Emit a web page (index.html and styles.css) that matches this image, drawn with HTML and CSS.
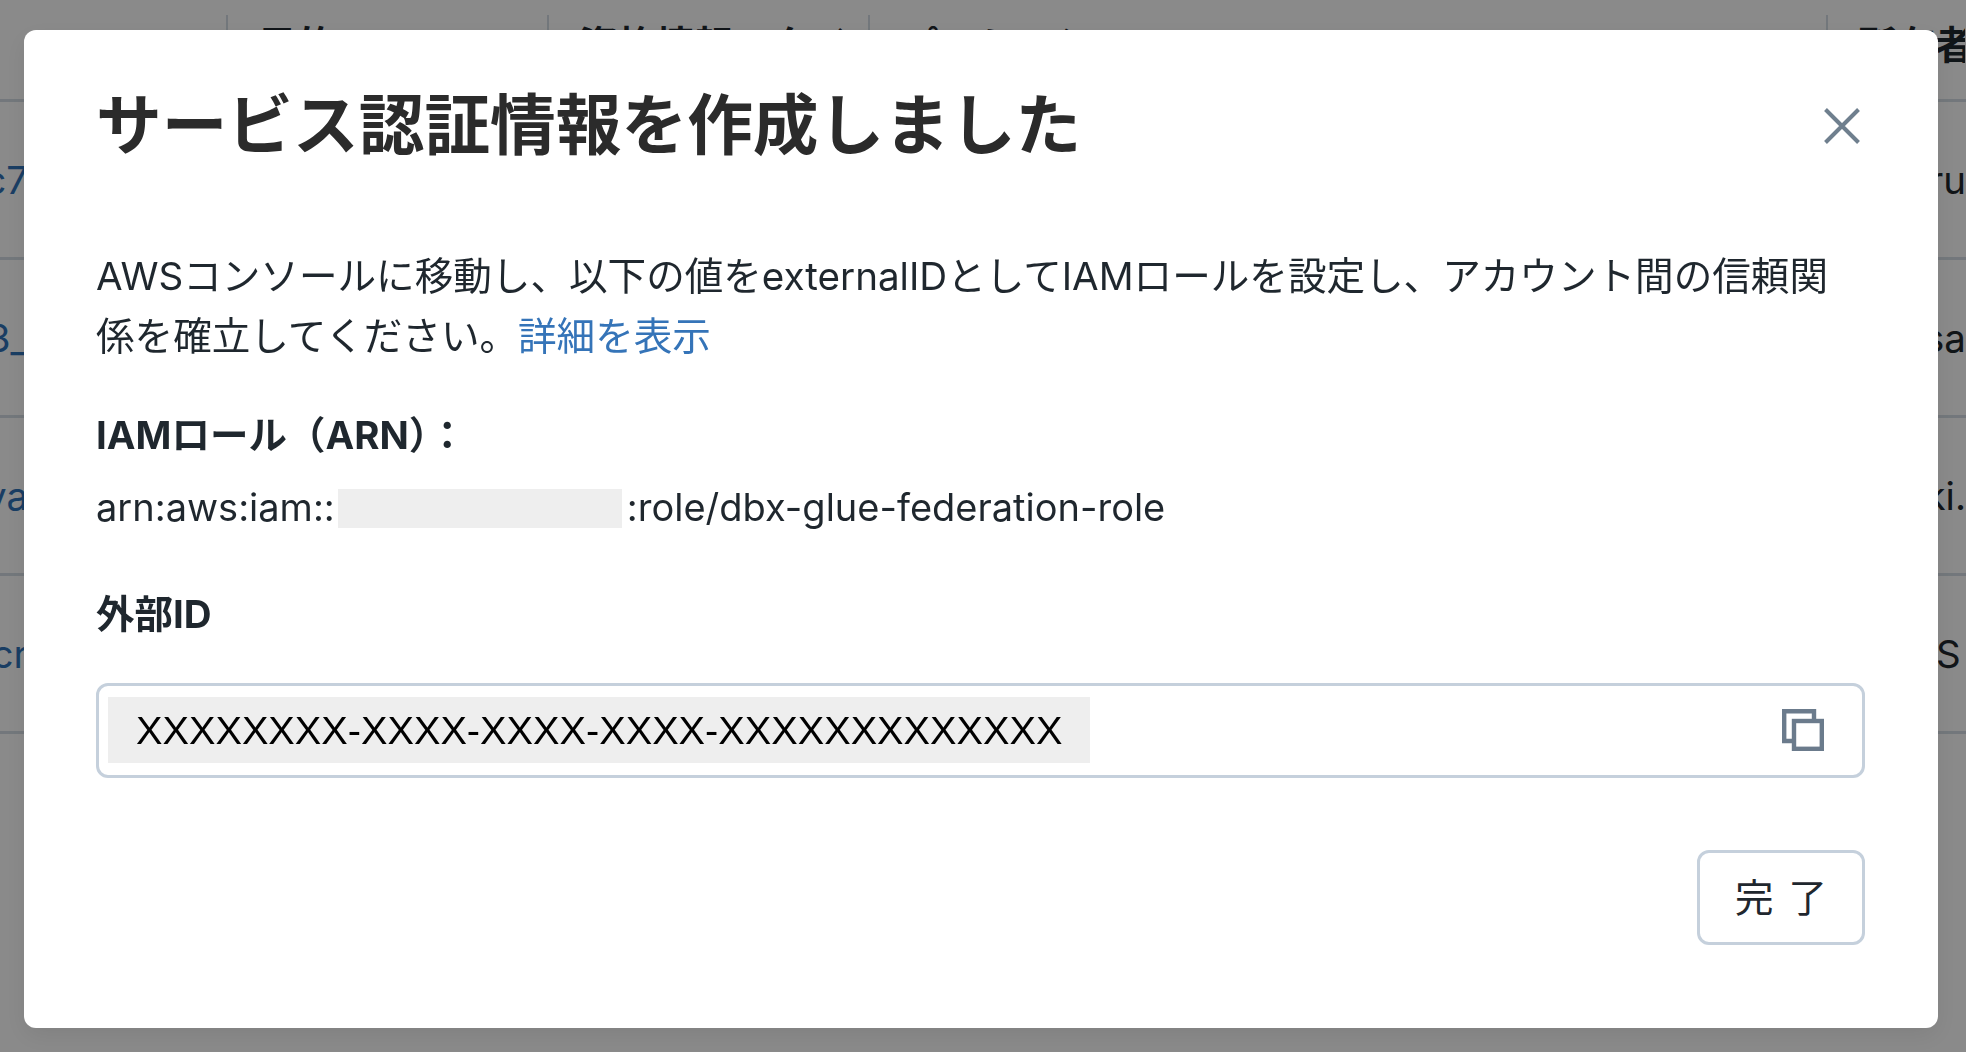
FILE: index.html
```html
<!DOCTYPE html>
<html lang="ja">
<head>
  <meta charset="UTF-8" />
  <meta name="viewport" content="width=device-width, initial-scale=1.0" />
  <title>サービス認証情報を作成しました</title>
  <link rel="stylesheet" href="styles.css">
</head>
<body>
  <div class="page">
    <div class="head-row">
      <div class="col-first"></div>
      <div class="col head-cell">目的</div>
      <div class="col head-cell">資格情報のタイプ</div>
      <div class="col-wide head-cell">パーミッション</div>
      <div class="col-last head-cell">所有者</div>
    </div>
    <div class="row">
      <div class="col-first link-cell">abc7</div>
      <div class="col-rest"></div>
      <div class="col-last">ru</div>
    </div>
    <div class="row">
      <div class="col-first link-cell">db3_</div>
      <div class="col-rest"></div>
      <div class="col-last">sa</div>
    </div>
    <div class="row">
      <div class="col-first link-cell">mya</div>
      <div class="col-rest"></div>
      <div class="col-last">ki.</div>
    </div>
    <div class="row">
      <div class="col-first link-cell">cr</div>
      <div class="col-rest"></div>
      <div class="col-last">S</div>
    </div>
  </div>

  <div class="overlay"></div>

  <div class="modal">
    <div class="modal-header">
      <h2 class="modal-title">サービス認証情報を作成しました</h2>
      <svg class="close-icon" width="36" height="36" viewBox="0 0 36 36" fill="none">
        <path d="M1.5 1.5L34.5 34.5M34.5 1.5L1.5 34.5" stroke="#6f7f8e" stroke-width="4" />
      </svg>
    </div>

    <p class="intro">AWSコンソールに移動し、以下の値をexternalIDとしてIAMロールを設定し、アカウント間の信頼関係を確立してください。<a class="link" href="#">詳細を表示</a></p>

    <div class="label label-arn">IAMロール（ARN）：</div>
    <div class="arn">arn:aws:iam::<span class="redacted"></span>:role/dbx-glue-federation-role</div>

    <div class="label label-id">外部ID</div>
    <div class="id-box">
      <span class="id-value">XXXXXXXX-XXXX-XXXX-XXXX-XXXXXXXXXXXXX</span>
      <svg class="copy-icon" width="42" height="42" viewBox="0 0 42 42" fill="none">
        <path d="M12 32H2.2V2.2H32V12" stroke="#6b7b8c" stroke-width="4.4" />
        <rect x="12" y="12" width="27.8" height="27.8" stroke="#6b7b8c" stroke-width="4.4" />
      </svg>
    </div>

    <div class="modal-footer">
      <button class="btn">完 了</button>
    </div>
  </div>
</body>
</html>
```

FILE: styles.css
```css
* {
  box-sizing: border-box;
}
html, body {
  height: 100%;
}
body {
  margin: 0;
  overflow: hidden;
  background: #fff;
  color: #1f272e;
  font-family: Inter, "Noto Sans CJK JP", sans-serif;
  font-size: 38.5px;
}

/* table behind the dialog */
.page {
  padding-top: 15px;
}
.head-row {
  display: flex;
  height: 87px;
  border-bottom: 3px solid #d5dde5;
  font-weight: bold;
}
.row {
  display: flex;
  align-items: center;
  height: 158px;
  border-bottom: 3px solid #d5dde5;
}
.col-first {
  display: flex;
  justify-content: flex-end;
  flex: 0 0 226px;
  white-space: nowrap;
}
.col {
  flex: 0 0 321px;
}
.col-wide {
  flex: 0 0 958px;
}
.col-rest {
  flex: 1;
}
.col-last {
  flex: 0 0 31px;
  padding-left: 1px;
  white-space: nowrap;
}
.head-row .col-last {
  flex: 0 0 139px;
  padding-left: 30px;
}
.head-cell {
  padding: 5px 0 0 30px;
  border-left: 2px solid #d5dde5;
  height: 50px;
  line-height: 50px;
  white-space: nowrap;
  overflow: hidden;
}
.link-cell {
  flex: 0 0 28px;
  overflow: hidden;
  color: #2f72b8;
}

.overlay {
  position: fixed;
  inset: 0;
  background: rgba(0, 0, 0, 0.46);
}

/* dialog */
.modal {
  position: fixed;
  left: 24px;
  top: 30px;
  width: 1914px;
  height: 998px;
  padding: 0 73px 0 72px;
  background: #fff;
  border-radius: 12px;
  box-shadow: 0 8px 24px rgba(0, 0, 0, 0.08);
}
.modal-header {
  display: flex;
  align-items: center;
  justify-content: space-between;
  height: 191px;
  padding-right: 5px;
}
.modal-title {
  margin: 0;
  font-size: 65.7px;
  font-weight: bold;
  line-height: 1.2;
  color: #2b2b2b;
}
.intro {
  margin: 25px 0 0;
  padding-right: 30px;
  font-size: 38.6px;
  line-height: 60px;
}
.link {
  color: #3574b8;
  text-decoration: none;
}
.label {
  font-weight: bold;
  line-height: 60px;
}
.label-arn {
  margin-top: 39px;
}
.arn {
  display: flex;
  align-items: center;
  height: 60px;
  margin-top: 12px;
  font-size: 38px;
}
.redacted {
  width: 284px;
  height: 39px;
  margin: 3px 5px 0 3px;
  background: #eee;
}
.label-id {
  margin-top: 47px;
}
.id-box {
  display: flex;
  align-items: center;
  justify-content: space-between;
  height: 95px;
  margin-top: 39px;
  padding: 0 38px 0 9px;
  border: 3px solid #c5d0dc;
  border-radius: 12px;
}
.id-value {
  display: block;
  width: 982px;
  height: 66px;
  margin-bottom: 2px;
  padding-left: 28px;
  line-height: 66px;
  background: #eee;
  color: #000;
  font-family: "Liberation Sans", sans-serif;
  font-size: 39.7px;
  white-space: nowrap;
}
.copy-icon {
  margin-bottom: 2px;
}
.modal-footer {
  display: flex;
  justify-content: flex-end;
  margin-top: 72px;
}
.btn {
  width: 168px;
  height: 95px;
  padding: 0 0 5px;
  background: #fff;
  border: 3px solid #c5d0dc;
  border-radius: 12px;
  font: inherit;
  word-spacing: 4px;
  color: #1f272e;
}
```
